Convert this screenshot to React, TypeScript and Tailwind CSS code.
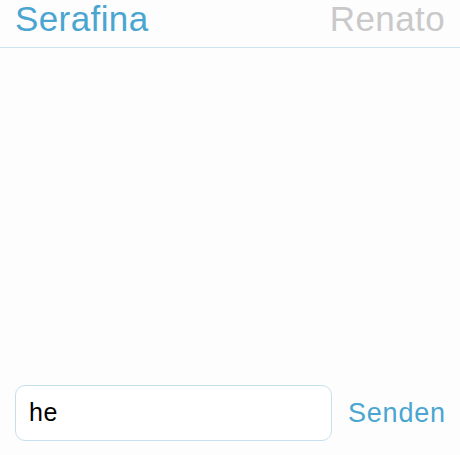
import React from "react";

export default function App() {
  return (
    <div className="w-[460px] h-[455px] bg-[#fdfdfe] flex flex-col" style={{ fontFamily: "'Liberation Sans', Arial, sans-serif" }}>
      <div className="h-[48px] flex items-start justify-between px-[15px] border-b border-[#cde4f0]">
        <span className="text-[35px] leading-[35px] mt-[1px] tracking-[0.4px] text-[#4aa6d0]">Serafina</span>
        <span className="text-[35px] leading-[35px] mt-[1px] tracking-[0.4px] text-[#c9c9c9]">Renato</span>
      </div>
      <div className="flex-1" />
      <div className="flex items-center pl-[15px] pb-[14px]">
        <div className="w-[317px] h-[56px] rounded-[10px] border border-[#c5e0ec] bg-white flex items-center px-[13px]">
          <span className="text-[25px] text-black tracking-[0.5px]">he</span>
        </div>
        <span className="ml-[16px] text-[27px] tracking-[0.8px] text-[#4aa6d0]">Senden</span>
      </div>
    </div>
  );
}
